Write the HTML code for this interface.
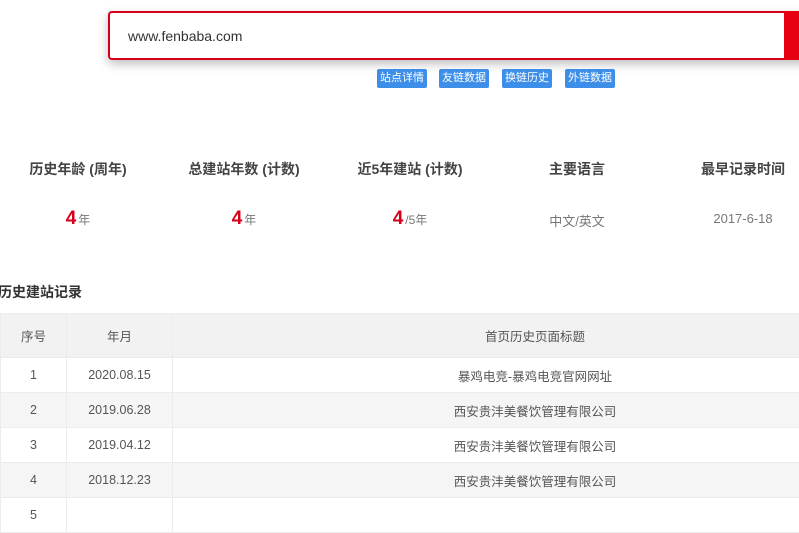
<!DOCTYPE html>
<html><head><meta charset="utf-8"><style>
*{margin:0;padding:0;box-sizing:border-box}
body{width:799px;height:504px;overflow:hidden;background:#fff;font-family:"Liberation Sans","Noto Sans CJK SC",sans-serif;color:#555;position:relative}
.search{position:absolute;left:108px;top:11px;width:720px;height:49px;border:2px solid #d7001a;border-radius:4px;background:#fff;box-shadow:0 4px 10px rgba(0,0,0,.25)}
.search span{position:absolute;left:18px;top:15px;font-size:14px;color:#333}
.btn{position:absolute;left:784px;top:11px;width:15px;height:49px;background:#e60012}
.tag{position:absolute;top:69px;height:19px;width:50px;background:#3c8ee8;color:#fff;font-size:11px;line-height:19px;text-align:center;border-radius:2px}
.st{position:absolute;width:166px;text-align:center}
.t{top:159px;font-size:14px;font-weight:bold;color:#444}
.v{top:208px;font-size:12px;color:#777}
.v b{color:#d7001a;font-size:19px;margin-right:2px}
.h{position:absolute;left:-2px;top:282px;font-size:14px;font-weight:bold;color:#333}
table{position:absolute;left:0;top:313px;width:898px;border-collapse:collapse;font-size:12.5px;color:#555}
td{border:1px solid #ececec;text-align:center;height:35px}
tr.hd td{height:44px;background:#f2f2f2}
tr.g td{background:#f5f5f5}
</style></head><body>
<div class="search"><span>www.fenbaba.com</span></div><div class="btn"></div>
<div class="tag" style="left:377px">站点详情</div>
<div class="tag" style="left:439px">友链数据</div>
<div class="tag" style="left:502px">换链历史</div>
<div class="tag" style="left:565px">外链数据</div>
<div class="st t" style="left:-5px">历史年龄 (周年)</div>
<div class="st t" style="left:161px">总建站年数 (计数)</div>
<div class="st t" style="left:327px">近5年建站 (计数)</div>
<div class="st t" style="left:494px">主要语言</div>
<div class="st t" style="left:660px">最早记录时间</div>
<div class="st v" style="left:-5px"><b>4</b>年</div>
<div class="st v" style="left:161px"><b>4</b>年</div>
<div class="st v" style="left:327px"><b>4</b>/5年</div>
<div class="st v" style="left:494px;top:211px;font-size:13px">中文/英文</div>
<div class="st v" style="left:660px;top:211px;font-size:13px">2017-6-18</div>
<div class="h">历史建站记录</div>
<table>
<tr class="hd"><td style="width:66px">序号</td><td style="width:106px">年月</td><td>首页历史页面标题</td></tr>
<tr><td>1</td><td>2020.08.15</td><td>暴鸡电竞-暴鸡电竞官网网址</td></tr>
<tr class="g"><td>2</td><td>2019.06.28</td><td>西安贵沣美餐饮管理有限公司</td></tr>
<tr><td>3</td><td>2019.04.12</td><td>西安贵沣美餐饮管理有限公司</td></tr>
<tr class="g"><td>4</td><td>2018.12.23</td><td>西安贵沣美餐饮管理有限公司</td></tr>
<tr><td>5</td><td></td><td></td></tr>
</table>
</body></html>
